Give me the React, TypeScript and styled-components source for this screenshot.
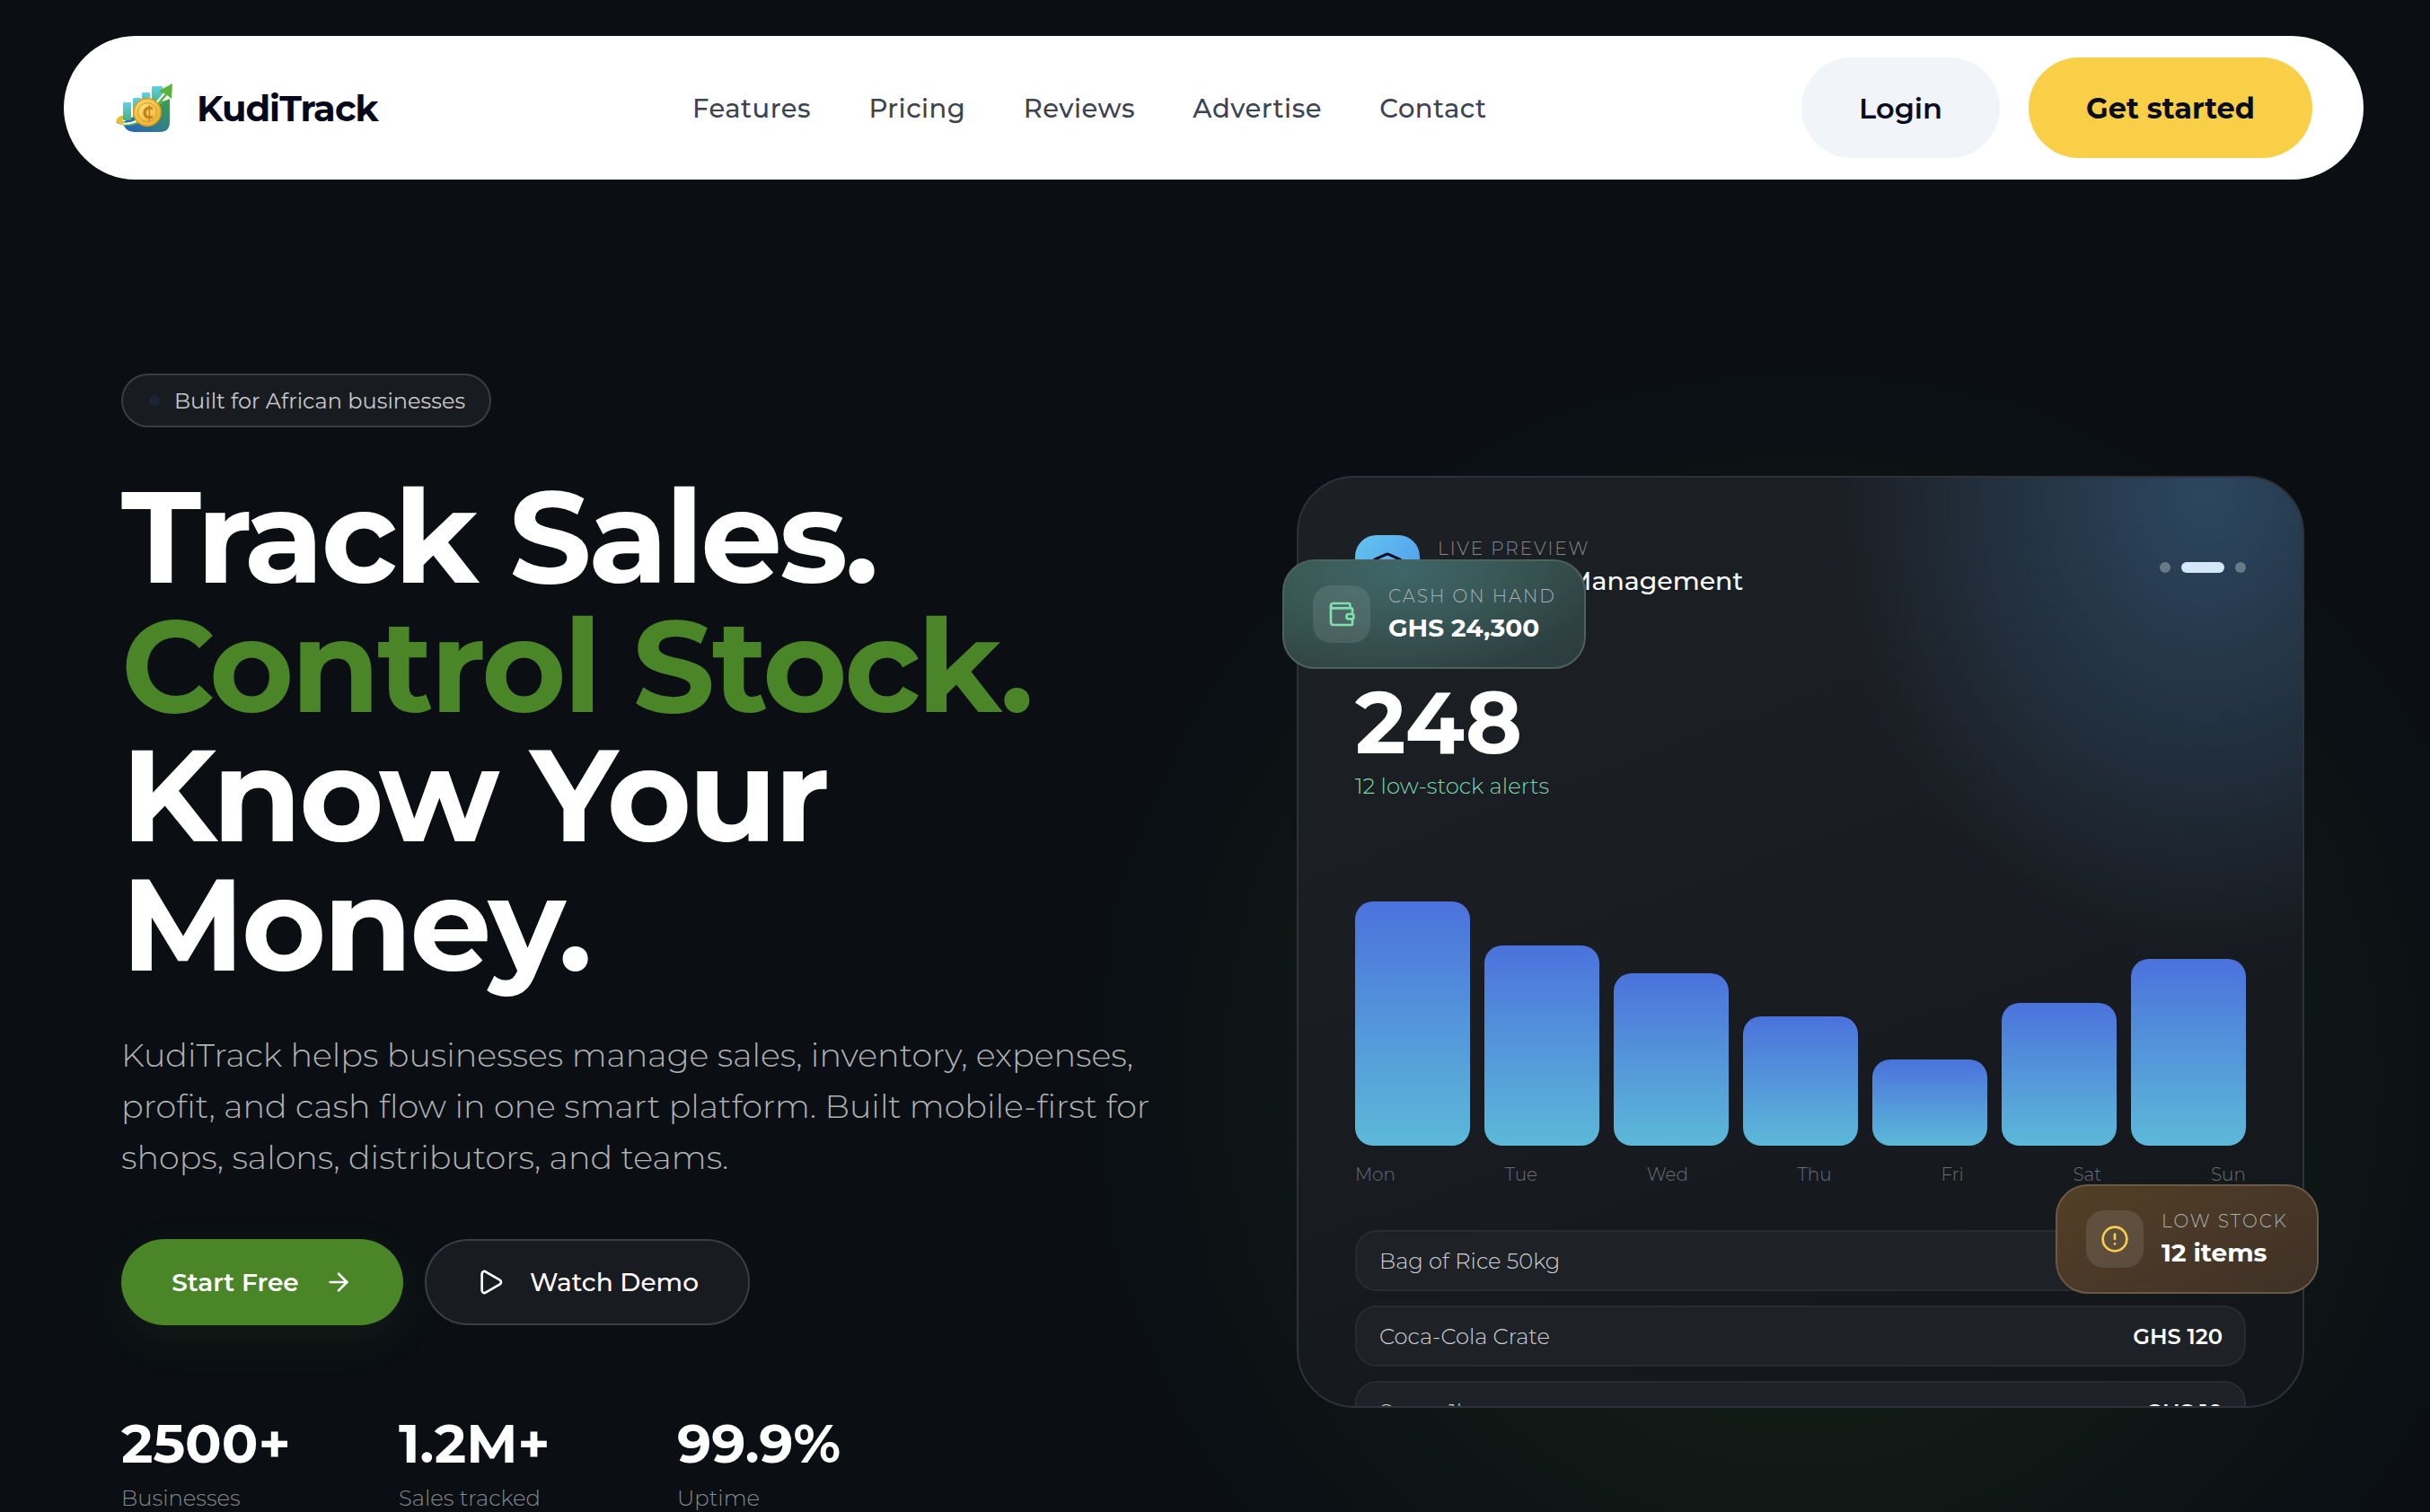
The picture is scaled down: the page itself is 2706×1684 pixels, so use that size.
import React from "react";
import styled, { createGlobalStyle } from "styled-components";
import { ArrowRight, Play, Wallet, CircleAlert, Layers } from "lucide-react";

const FONT = `Montserrat, Inter, "Noto Sans", sans-serif`;

const Global = createGlobalStyle`
  html, body { margin: 0; padding: 0; background: #0b0f14; }
  body { font-family: ${FONT}; overflow: hidden; }
  * { box-sizing: border-box; }
`;

const Page = styled.div`
  width: 2706px;
  height: 1684px;
  overflow: hidden;
  background:
    radial-gradient(ellipse 800px 800px at 2005px 1200px, rgba(70, 130, 40, 0.2), rgba(70, 130, 40, 0) 100%),
    #0b0f14;
  padding-top: 40px;
`;

const Nav = styled.nav`
  width: 2561px;
  height: 160px;
  margin-left: 71px;
  background: #fff;
  border-radius: 80px;
  padding: 0 57px 0 58px;
  display: flex;
  align-items: center;
`;

const Brand = styled.div`
  display: flex;
  align-items: center;
  gap: 26px;
  width: 642px;
  font-size: 40px;
  font-weight: 700;
  color: #05081a;
  letter-spacing: -1px;
`;

const Links = styled.div`
  display: flex;
  gap: 64.4px;
  flex: 1;
`;

const NavLink = styled.a`
  font-size: 29px;
  font-weight: 500;
  color: #3c4452;
  letter-spacing: 0.5px;
`;

const NavActions = styled.div`
  display: flex;
  gap: 32px;
`;

const NavButton = styled.button<{ $primary?: boolean }>`
  height: 112px;
  width: ${(p) => (p.$primary ? 316 : 221)}px;
  border: 0;
  border-radius: 56px;
  font-family: ${FONT};
  font-size: 32px;
  font-weight: ${(p) => (p.$primary ? 700 : 600)};
  color: #0a0d20;
  background: ${(p) => (p.$primary ? "#f9cf47" : "#f1f4f9")};
`;

const Hero = styled.main`
  display: grid;
  grid-template-columns: 1fr 1122px;
  padding: 216px 140px 0 135px;
`;

const Left = styled.section`
  display: flex;
  flex-direction: column;
  align-items: flex-start;
`;

const Badge = styled.div`
  height: 60px;
  width: 412px;
  display: flex;
  align-items: center;
  gap: 16px;
  padding-left: 29px;
  border: 2px solid #3a3d42;
  border-radius: 30px;
  background: #181b20;
  color: #c6c8ca;
  font-size: 24px;
`;

const BadgeDot = styled.span`
  width: 12px;
  height: 12px;
  border-radius: 50%;
  background: #1c2436;
`;

const Title = styled.h1`
  margin: 50px 0 0;
  font-size: 144px;
  line-height: 144px;
  font-weight: 700;
  color: #fff;
  letter-spacing: -3.5px;
`;

const TitleLine = styled.span<{ $green?: boolean }>`
  display: block;
  color: ${(p) => (p.$green ? "#4a8528" : "#fff")};
`;

const Lead = styled.p`
  margin: 45px 0 0;
  font-size: 36.5px;
  line-height: 57px;
  font-weight: 300;
  color: #b0b2b5;
  width: 1180px;
`;

const Cta = styled.div`
  display: flex;
  gap: 24px;
  margin-top: 62px;
`;

const CtaButton = styled.button<{ $primary?: boolean }>`
  height: 96px;
  width: ${(p) => (p.$primary ? 314 : 362)}px;
  border-radius: 48px;
  display: flex;
  align-items: center;
  justify-content: center;
  gap: 28px;
  font-family: ${FONT};
  font-size: 28px;
  font-weight: ${(p) => (p.$primary ? 600 : 500)};
  color: #fff;
  border: ${(p) => (p.$primary ? "0" : "2px solid #3a3d42")};
  background: ${(p) => (p.$primary ? "#4a8528" : "#181b20")};
  box-shadow: ${(p) => (p.$primary ? "0 16px 48px rgba(74,133,40,.1)" : "none")};
`;

const Stats = styled.div`
  display: flex;
  margin-top: 96px;
`;

const Stat = styled.div<{ $w: number }>`
  width: ${(p) => p.$w}px;
`;

const StatValue = styled.div`
  font-size: 60px;
  line-height: 72px;
  font-weight: 700;
  color: #fff;
`;

const StatLabel = styled.div`
  font-size: 24.3px;
  font-weight: 300;
  line-height: 36px;
  margin-top: 6px;
  color: #85888c;
`;

const Right = styled.section`
  position: relative;
  padding-top: 114px;
`;

const Card = styled.div`
  height: 1038px;
  border: 2px solid #2e3137;
  border-radius: 64px;
  padding: 64px 63px 0 63px;
  overflow: hidden;
  background:
    radial-gradient(ellipse 420px 520px at 1010px 20px, rgba(56, 100, 140, 0.58), rgba(56, 100, 140, 0) 100%),
    linear-gradient(160deg, #1c1f24 0%, #1a1d22 40%, #12151a 100%);
`;

const CardHead = styled.div`
  display: flex;
  align-items: center;
  gap: 20px;
`;

const AppIcon = styled.div`
  width: 72px;
  height: 72px;
  border-radius: 24px;
  background: linear-gradient(135deg, #63c4ec, #4f95ef);
  display: flex;
  align-items: center;
  justify-content: center;
`;

const HeadText = styled.div`
  flex: 1;
`;

const Eyebrow = styled.div`
  font-size: 20px;
  font-weight: 300;
  line-height: 28px;
  letter-spacing: 2px;
  color: #85888c;
  text-transform: uppercase;
`;

const HeadTitle = styled.div`
  font-size: 28.4px;
  font-weight: 500;
  line-height: 40px;
  margin-top: 2px;
  color: #fff;
`;

const Dots = styled.div`
  display: flex;
  gap: 12px;
  align-items: center;
`;

const Dot = styled.span<{ $active?: boolean }>`
  height: 12px;
  width: ${(p) => (p.$active ? 48 : 12)}px;
  border-radius: 6px;
  background: ${(p) => (p.$active ? "#d5e8fb" : "rgba(255,255,255,.3)")};
`;

const BigNum = styled.div`
  margin-top: 81px;
  font-size: 96px;
  font-weight: 700;
  line-height: 112px;
  color: #fff;
`;

const Alerts = styled.div`
  font-size: 24.4px;
  font-weight: 300;
  line-height: 28px;
  color: #78d8ab;
`;

const Chart = styled.div`
  margin-top: 67px;
  height: 320px;
  display: flex;
  gap: 16px;
  align-items: flex-end;
`;

const Bar = styled.div`
  flex: 1;
  border-radius: 20px;
  background: linear-gradient(180deg, #4b72dc, #5cb9d8);
`;

const Days = styled.div`
  display: flex;
  justify-content: space-between;
  margin-top: 18px;
  font-size: 20px;
  font-weight: 300;
  line-height: 28px;
  color: #6a6e73;
`;

const Rows = styled.div`
  display: flex;
  flex-direction: column;
  gap: 16px;
  margin-top: 48px;
`;

const Row = styled.div`
  flex: none;
  height: 68px;
  border: 2px solid #282b30;
  border-radius: 24px;
  background: #1e2126;
  padding: 0 24px 0 25px;
  display: flex;
  align-items: center;
  justify-content: space-between;
  font-size: 24.2px;
  color: #cfd0d2;
  font-weight: 300;
`;

const Price = styled.span`
  color: #fff;
  font-weight: 600;
`;

const Floating = styled.div<{ $tone: "green" | "brown" }>`
  position: absolute;
  height: 122px;
  border-radius: 36px;
  display: flex;
  align-items: center;
  gap: 20px;
  padding-left: 32px;
  ${(p) =>
    p.$tone === "green"
      ? `left:-16px; top:207px; width:338px; border:2px solid #4c625d;
         background: radial-gradient(ellipse 220px 120px at 130px 10px, #3f6668, rgba(63,102,104,0) 100%), linear-gradient(160deg,#365247,#2c3c40);`
      : `left:845px; top:903px; width:293px; border:2px solid #6a5a43;
         background: linear-gradient(150deg,#533f26,#3f3128);`}
`;

const FloatIcon = styled.div`
  width: 64px;
  height: 64px;
  border-radius: 20px;
  background: rgba(255, 255, 255, 0.1);
  display: flex;
  align-items: center;
  justify-content: center;
`;

const FloatLabel = styled.div`
  font-size: 20px;
  font-weight: 300;
  line-height: 28px;
  letter-spacing: 2px;
  color: #a9b0ad;
  text-transform: uppercase;
`;

const FloatValue = styled.div`
  font-size: 28px;
  font-weight: 700;
  line-height: 38px;
  margin-top: 2px;
  color: #fff;
`;

const Logo = () => (
  <svg width="64" height="58" viewBox="0 0 64 58">
    <defs>
      <linearGradient id="lb" x1="0" y1="1" x2="1" y2="0">
        <stop offset="0" stopColor="#2560c8" />
        <stop offset="1" stopColor="#3fa044" />
      </linearGradient>
      <linearGradient id="lbar" x1="0" y1="0" x2="0" y2="1">
        <stop offset="0" stopColor="#5fd0e8" />
        <stop offset="1" stopColor="#46b27a" />
      </linearGradient>
      <radialGradient id="lc" cx=".4" cy=".35" r=".7">
        <stop offset="0" stopColor="#fde27a" />
        <stop offset="1" stopColor="#eeb02c" />
      </radialGradient>
    </defs>
    <g transform="translate(0 1)">
      <path d="M8 44 L50 22 L60 18 V44 Q60 55 49 55 H20 Q10 55 8 44Z" fill="url(#lb)" />
      <rect x="8" y="22" width="9" height="20" rx="1" fill="url(#lbar)" />
      <rect x="19" y="17" width="9" height="22" rx="1" fill="url(#lbar)" />
      <rect x="29" y="11" width="9" height="22" rx="1" fill="url(#lbar)" />
      <rect x="40" y="4" width="12" height="20" rx="1" fill="url(#lbar)" />
      <path d="M1 45 C-1 40 6 38 10 36 C7 40 6 43 9 44 C20 47 30 40 38 30 L53 13 L48 9 L63 1 L62 18 L57 14 L40 34 C30 46 14 52 1 45Z" fill="#5ab33a" />
      <path d="M4 45 C18 48 30 40 38 31 L54 12" fill="none" stroke="#fff" strokeWidth="2" />
      <path d="M1 43 C0 39 5 37 9 36 C6 40 6 43 10 45 C6 47 2 46 1 43Z" fill="#f3b92f" />
      <circle cx="35" cy="33" r="16" fill="#d99a1e" />
      <circle cx="35" cy="33" r="14.5" fill="url(#lc)" />
      <circle cx="35" cy="33" r="10.5" fill="none" stroke="#d9982a" strokeWidth="1" />
      <text x="35" y="40" fontSize="19" fontWeight="700" fill="#c5821a" textAnchor="middle" fontFamily="'DejaVu Sans', sans-serif">₵</text>
    </g>
  </svg>
);

const barHeights = [272, 223, 192, 144, 96, 159, 208];
const days = ["Mon", "Tue", "Wed", "Thu", "Fri", "Sat", "Sun"];

export default function App() {
  return (
    <Page>
      <Global />
      <Nav>
        <Brand>
          <Logo />
          KudiTrack
        </Brand>
        <Links>
          <NavLink>Features</NavLink>
          <NavLink>Pricing</NavLink>
          <NavLink>Reviews</NavLink>
          <NavLink>Advertise</NavLink>
          <NavLink>Contact</NavLink>
        </Links>
        <NavActions>
          <NavButton>Login</NavButton>
          <NavButton $primary>Get started</NavButton>
        </NavActions>
      </Nav>
      <Hero>
        <Left>
          <Badge>
            <BadgeDot />
            Built for African businesses
          </Badge>
          <Title>
            <TitleLine>Track Sales.</TitleLine>
            <TitleLine $green>Control Stock.</TitleLine>
            <TitleLine>Know Your</TitleLine>
            <TitleLine>Money.</TitleLine>
          </Title>
          <Lead>
            KudiTrack helps businesses manage sales, inventory, expenses, profit, and cash flow in one smart
            platform. Built mobile-first for shops, salons, distributors, and teams.
          </Lead>
          <Cta>
            <CtaButton $primary>
              Start Free
              <ArrowRight size={32} strokeWidth={2} />
            </CtaButton>
            <CtaButton>
              <Play size={32} strokeWidth={2} />
              Watch Demo
            </CtaButton>
          </Cta>
          <Stats>
            <Stat $w={309}>
              <StatValue>2500+</StatValue>
              <StatLabel>Businesses</StatLabel>
            </Stat>
            <Stat $w={310}>
              <StatValue>1.2M+</StatValue>
              <StatLabel>Sales tracked</StatLabel>
            </Stat>
            <Stat $w={260}>
              <StatValue>99.9%</StatValue>
              <StatLabel>Uptime</StatLabel>
            </Stat>
          </Stats>
        </Left>
        <Right>
          <Card>
            <CardHead>
              <AppIcon>
                <Layers size={36} color="#0a0d20" strokeWidth={2} />
              </AppIcon>
              <HeadText>
                <Eyebrow>Live Preview</Eyebrow>
                <HeadTitle>Inventory Management</HeadTitle>
              </HeadText>
              <Dots>
                <Dot />
                <Dot $active />
                <Dot />
              </Dots>
            </CardHead>
            <BigNum>248</BigNum>
            <Alerts>12 low-stock alerts</Alerts>
            <Chart>
              {barHeights.map((h, i) => (
                <Bar key={days[i]} style={{ height: h }} />
              ))}
            </Chart>
            <Days>
              {days.map((d) => (
                <span key={d}>{d}</span>
              ))}
            </Days>
            <Rows>
              <Row>
                Bag of Rice 50kg<Price>GHS 450</Price>
              </Row>
              <Row>
                Coca-Cola Crate<Price>GHS 120</Price>
              </Row>
              <Row>
                Sugar 1kg<Price>GHS 10</Price>
              </Row>
            </Rows>
          </Card>
          <Floating $tone="green">
            <FloatIcon>
              <Wallet size={32} color="#7fe0ae" strokeWidth={2} />
            </FloatIcon>
            <div>
              <FloatLabel>Cash on hand</FloatLabel>
              <FloatValue>GHS 24,300</FloatValue>
            </div>
          </Floating>
          <Floating $tone="brown">
            <FloatIcon>
              <CircleAlert size={32} color="#f7ce4a" strokeWidth={2} />
            </FloatIcon>
            <div>
              <FloatLabel>Low stock</FloatLabel>
              <FloatValue>12 items</FloatValue>
            </div>
          </Floating>
        </Right>
      </Hero>
    </Page>
  );
}
